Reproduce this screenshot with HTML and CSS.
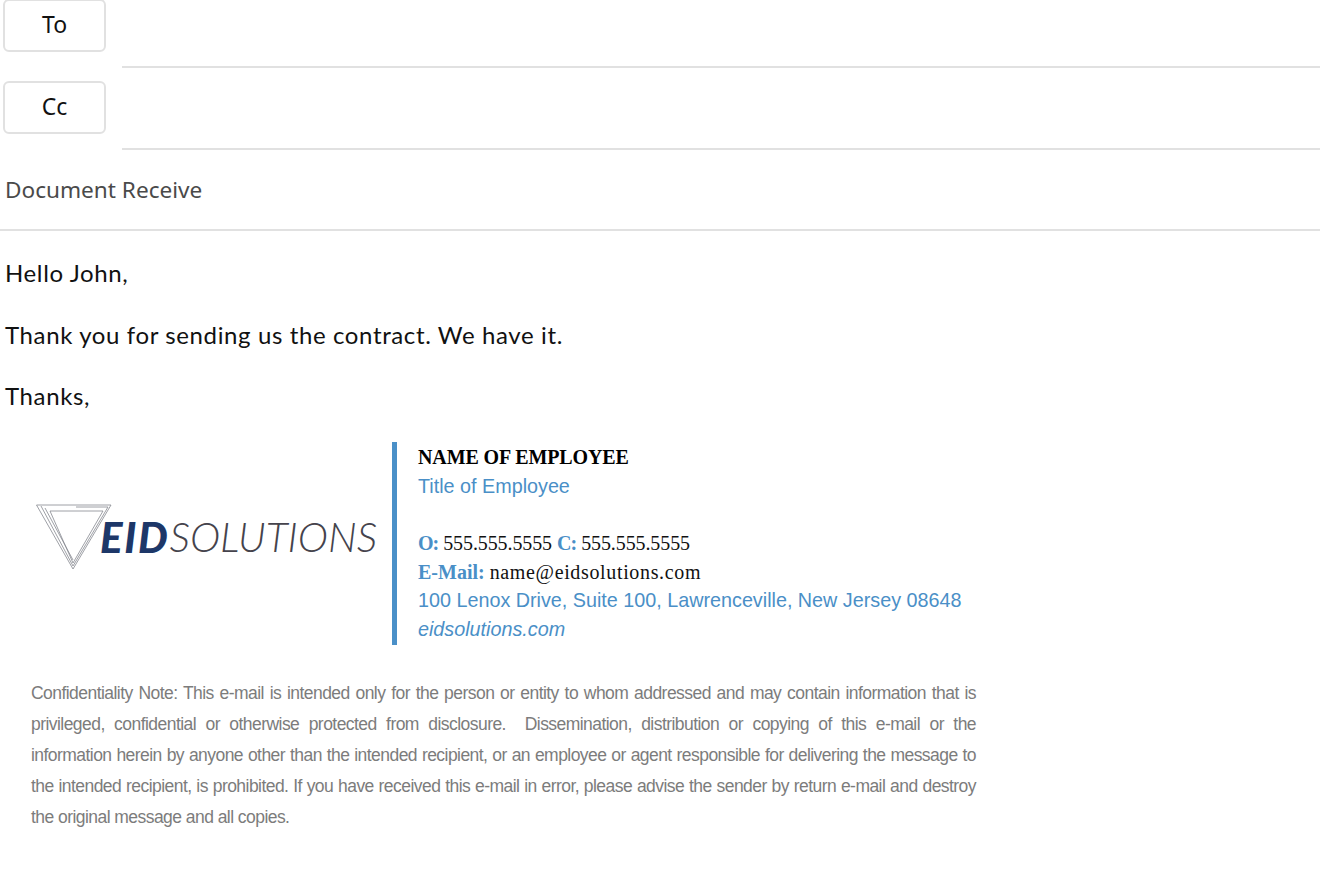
FILE: index.html
```html
<!DOCTYPE html>
<html lang="en">
<head>
    <meta charset="UTF-8">
    <title>Document Receive</title>
    <link rel="stylesheet" href="styles.css">
</head>
<body>
    <div class="compose">
        <div class="address-row">
            <button class="address-btn">To</button>
            <div class="address-field"></div>
        </div>
        <div class="address-row">
            <button class="address-btn">Cc</button>
            <div class="address-field"></div>
        </div>
        <div class="subject">Document Receive</div>

        <div class="message">
            <p>Hello John,</p>
            <p>Thank you for sending us the contract. We have it.</p>
            <p>Thanks,</p>
        </div>

        <div class="signature">
            <div class="logo">
                <svg class="logo-mark" viewBox="0 0 76 67" width="76" height="67" fill="none" stroke="#85888f" stroke-width="0.8">
                    <path d="M0.5 1H75L37 65Z"/>
                    <path d="M5 2L37 62L72 3H40"/>
                    <path d="M14 7H67L37 59Z"/>
                    <path d="M9 4L37 56"/>
                </svg>
                <span class="logo-eid">EID</span><span class="logo-solutions">SOLUTIONS</span>
            </div>
            <div class="contact">
                <div class="employee-name">NAME OF EMPLOYEE</div>
                <div class="sans-line">Title of Employee</div>
                <div class="sans-line">&nbsp;</div>
                <div class="serif-line"><b class="phone-label">O:</b> <span class="phone">555.555.5555</span> <b class="phone-label">C:</b> <span class="phone">555.555.5555</span></div>
                <div class="serif-line"><b>E-Mail:</b> <span class="email">name@eidsolutions.com</span></div>
                <div class="sans-line">100 Lenox Drive, Suite 100, Lawrenceville, New Jersey 08648</div>
                <div class="sans-line site">eidsolutions.com</div>
            </div>
        </div>

        <p class="disclaimer">Confidentiality Note: This e-mail is intended only for the person or entity to whom addressed and may contain information that is privileged, confidential or otherwise protected from disclosure.&nbsp; Dissemination, distribution or copying of this e-mail or the information herein by anyone other than the intended recipient, or an employee or agent responsible for delivering the message to the intended recipient, is prohibited. If you have received this e-mail in error, please advise the sender by return e-mail and destroy the original message and all copies.</p>
    </div>
</body>
</html>
```

FILE: styles.css
```css
* {
    margin: 0;
    padding: 0;
    box-sizing: border-box;
}

body {
    background: #fff;
    font-family: 'Noto Sans', sans-serif;
    overflow: hidden;
}

.compose {
    margin-top: -1px;
}

.address-row {
    display: flex;
    height: 82px;
    padding-left: 3px;
}

.address-btn {
    width: 103px;
    height: 53px;
    padding-bottom: 3px;
    background: #fff;
    border: 2px solid #e1e1e1;
    border-radius: 6px;
    color: #111;
    font-family: 'Noto Sans', sans-serif;
    font-size: 23px;
}

.address-field {
    flex: 1;
    height: 69px;
    margin-left: 16px;
    border-bottom: 2px solid #e1e1e1;
}

.subject {
    height: 68px;
    padding: 11px 0 0 5px;
    border-bottom: 2px solid #e1e1e1;
    color: #4a4a4a;
    font-size: 22.6px;
    line-height: 32px;
}

.message {
    padding: 26px 0 0 5px;
    color: #111;
    font-family: Lato, sans-serif;
    font-size: 24px;
    letter-spacing: 0.62px;
    line-height: 32px;
}

.message p {
    margin-bottom: 29.5px;
}

.signature {
    display: flex;
    height: 203px;
}

.logo {
    display: flex;
    align-items: flex-end;
    width: 392px;
    height: 128px;
    padding-left: 36px;
    white-space: nowrap;
}

.logo-mark {
    margin: 0 -12px -1px 0;
}

.logo-eid {
    margin-bottom: 9px;
    color: #1d3768;
    font-family: Lato, sans-serif;
    font-size: 42px;
    font-style: italic;
    font-weight: 900;
    letter-spacing: 1.7px;
    line-height: 48px;
}

.logo-solutions {
    margin-bottom: 9px;
    color: #45434c;
    font-family: Lato, sans-serif;
    font-size: 41px;
    font-style: italic;
    font-weight: 300;
    line-height: 48px;
}

.contact {
    border-left: 5px solid #4a90c8;
    padding: 1px 0 0 21px;
    color: #4a8fc7;
    font-size: 19.75px;
    line-height: 28.7px;
}

.employee-name {
    color: #000;
    font-family: 'Liberation Serif', serif;
    font-size: 20px;
    font-weight: 700;
    letter-spacing: -0.12px;
    line-height: 29px;
}

.sans-line {
    font-family: 'Liberation Sans', sans-serif;
}

.serif-line {
    color: #111;
    font-family: 'Liberation Serif', serif;
    font-size: 20px;
}

.serif-line b {
    color: #4a8fc7;
}

.serif-line .phone-label {
    letter-spacing: -1px;
}

.phone {
    letter-spacing: -0.1px;
}

.email {
    letter-spacing: 0.65px;
}

.site {
    font-style: italic;
}

.disclaimer {
    width: 945px;
    margin: 33px 0 0 31px;
    color: #7c7c7c;
    font-family: 'Liberation Sans', sans-serif;
    font-size: 17.5px;
    letter-spacing: -0.55px;
    line-height: 31px;
    text-align: justify;
}
```
